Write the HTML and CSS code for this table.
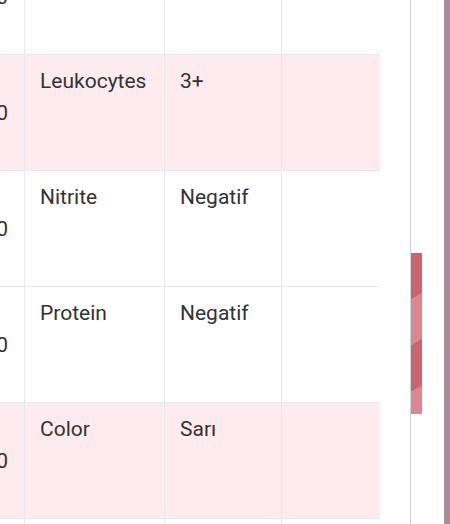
FILE: index.html
```html
<!DOCTYPE html>
<html lang="tr">
<head>
<meta charset="utf-8">
<title>Tahlil</title>
<link rel="stylesheet" href="styles.css">
</head>
<body>
<div class="screen">
  <div class="content">
    <div class="table">
      <div class="row">
        <div class="cell c1"><span>10</span></div>
        <div class="cell c2"></div>
        <div class="cell c3"></div>
        <div class="cell c4"></div>
      </div>
      <div class="row pink">
        <div class="cell c1"><span>10</span></div>
        <div class="cell c2">Leukocytes</div>
        <div class="cell c3">3+</div>
        <div class="cell c4"></div>
      </div>
      <div class="row">
        <div class="cell c1"><span>10</span></div>
        <div class="cell c2">Nitrite</div>
        <div class="cell c3">Negatif</div>
        <div class="cell c4"></div>
      </div>
      <div class="row">
        <div class="cell c1"><span>10</span></div>
        <div class="cell c2">Protein</div>
        <div class="cell c3">Negatif</div>
        <div class="cell c4"></div>
      </div>
      <div class="row pink">
        <div class="cell c1"><span>10</span></div>
        <div class="cell c2">Color</div>
        <div class="cell c3">Sarı</div>
        <div class="cell c4"></div>
      </div>
      <div class="row">
        <div class="cell c1"></div>
        <div class="cell c2"></div>
        <div class="cell c3"></div>
        <div class="cell c4"></div>
      </div>
    </div>
  </div>
  <div class="track">
    <div class="thumb"></div>
  </div>
  <div class="edge"></div>
</div>
</body>
</html>
```
FILE: styles.css
```css
html, body {
  margin: 0;
  padding: 0;
  background: #ffffff;
}
body {
  font-family: Roboto, "Noto Sans", "Liberation Sans", sans-serif;
  color: #333333;
}
.screen {
  display: flex;
  width: 450px;
  height: 524px;
  overflow: hidden;
}
.content {
  width: 410px;
  flex: none;
  overflow: hidden;
}
.table {
  width: 380px;
  margin-top: -61px;
}
.row {
  display: flex;
  height: 116px;
  box-sizing: border-box;
  border-bottom: 1px solid #e5e8ed;
}
.row.pink {
  background: #fdebee;
}
.cell {
  box-sizing: border-box;
  font-size: 21px;
  line-height: 30px;
  padding: 11px 0 0 15px;
  border-right: 1px solid #e5e8ed;
  white-space: nowrap;
  overflow: hidden;
}
.c1 {
  width: 25px;
  padding: 0 16px 0 0;
  display: flex;
  align-items: center;
  justify-content: flex-end;
}
.c1 span {
  flex: none;
}
.c2 { width: 140px; }
.c3 { width: 117px; }
.c4 { width: 98px; border-right: none; }
.track {
  width: 34px;
  flex: none;
  box-sizing: border-box;
  border-left: 1px solid #d2d2d4;
}
.thumb {
  width: 11px;
  height: 161px;
  margin-top: 253px;
  background: repeating-linear-gradient(150deg, #cc6470 0 40px, #da878f 40px 80px);
}
.edge {
  width: 6px;
  flex: none;
  background: #a98b99;
}
```
